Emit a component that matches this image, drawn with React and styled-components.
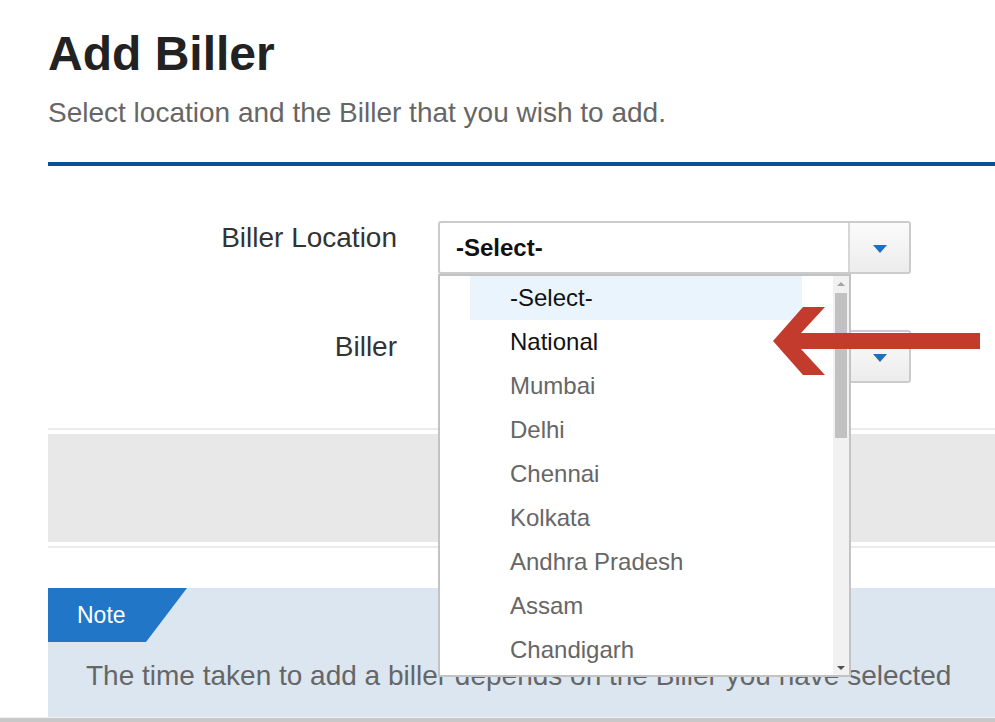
import styled, { createGlobalStyle } from "styled-components";

const GlobalStyle = createGlobalStyle`
  html, body {
    margin: 0;
    padding: 0;
    background: #fff;
    overflow: hidden;
  }
  body {
    font-family: "Liberation Sans", Arial, sans-serif;
  }
`;

const Page = styled.div`
  position: relative;
  height: 722px;
  padding-left: 48px;
  box-sizing: border-box;
  overflow: hidden;
`;

const Title = styled.h1`
  margin: 0;
  padding-top: 26px;
  font-size: 48px;
  line-height: 56px;
  font-weight: 700;
  color: #222;
`;

const Subtitle = styled.p`
  margin: 14px 0 0;
  font-size: 28px;
  line-height: 34px;
  color: #666;
`;

const Rule = styled.div`
  margin-top: 32px;
  height: 4px;
  background: #0a5096;
`;

const Form = styled.div`
  display: flex;
  flex-direction: column;
  gap: 56px;
  margin-top: 55px;
`;

const Row = styled.div`
  display: flex;
  align-items: flex-start;
`;

const Label = styled.label`
  width: 349px;
  margin-right: 41px;
  text-align: right;
  font-size: 28px;
  line-height: 34px;
  color: #333;
`;

const Field = styled.div`
  position: relative;
`;

const SelectBox = styled.div`
  display: flex;
  width: 473px;
  height: 53px;
  box-sizing: border-box;
  border: 2px solid #cbcbcb;
  border-radius: 3px;
  background: #fff;
`;

const Value = styled.div`
  flex: 1;
  padding-left: 16px;
  font-size: 24px;
  line-height: 49px;
  font-weight: 700;
  color: #111;
`;

const Toggle = styled.div`
  width: 59px;
  display: flex;
  align-items: center;
  justify-content: center;
  border-left: 2px solid #d6d6d6;
  background: linear-gradient(#fbfbfb, #ececec);
`;

const Caret = styled.span`
  width: 0;
  height: 0;
  margin-top: 3px;
  border-left: 7px solid transparent;
  border-right: 7px solid transparent;
  border-top: 8px solid #1e6fc2;
`;

const Dropdown = styled.div`
  position: absolute;
  top: 100%;
  left: 0;
  z-index: 2;
  width: 413px;
  height: 403px;
  box-sizing: border-box;
  border: 2px solid #c3c3c3;
  background: #fff;
  overflow: hidden;
`;

const Options = styled.ul`
  margin: 0;
  padding: 0 0 0 30px;
  list-style: none;
`;

const Option = styled.li`
  width: 332px;
  box-sizing: border-box;
  padding-left: 40px;
  font-size: 24px;
  line-height: 44px;
  color: ${(p) => (p.$strong ? "#111" : "#666")};
  background: ${(p) => (p.$active ? "#eaf4fd" : "transparent")};
`;

const Scrollbar = styled.div`
  position: absolute;
  top: 0;
  right: 0;
  bottom: 0;
  width: 16px;
  display: flex;
  flex-direction: column;
  align-items: center;
  background: #f1f1f1;
`;

const ScrollButton = styled.div`
  height: 15px;
  width: 100%;
  display: flex;
  align-items: center;
  justify-content: center;
`;

const ArrowUp = styled.span`
  width: 0;
  height: 0;
  border-left: 4px solid transparent;
  border-right: 4px solid transparent;
  border-bottom: 4px solid #a3a3a3;
`;

const ArrowDown = styled.span`
  width: 0;
  height: 0;
  border-left: 4px solid transparent;
  border-right: 4px solid transparent;
  border-top: 4px solid #505050;
`;

const Thumb = styled.div`
  width: 12px;
  height: 145px;
  margin-top: 2px;
  background: #c1c1c1;
`;

const Spacer = styled.div`
  flex: 1;
`;

const ActionBar = styled.div`
  margin-top: 45px;
  padding: 4px 0;
  border-top: 2px solid #ebebeb;
  border-bottom: 2px solid #ebebeb;
`;

const ActionFill = styled.div`
  height: 108px;
  background: #e8e8e8;
`;

const Note = styled.div`
  margin-top: 40px;
  padding-bottom: 24px;
  background: #dce6f1;
`;

const NoteTag = styled.div`
  width: 139px;
  height: 54px;
  box-sizing: border-box;
  padding-left: 29px;
  font-size: 23px;
  line-height: 54px;
  color: #fff;
  background: #2176c7;
  clip-path: polygon(0 0, 100% 0, calc(100% - 41px) 100%, 0 100%);
`;

const NoteText = styled.p`
  margin: 17px 0 0;
  padding-left: 38px;
  font-size: 28px;
  line-height: 34px;
  color: #666;
  white-space: nowrap;
`;

const BottomEdge = styled.div`
  margin-left: -48px;
  height: 4px;
  border-top: 1px solid #eef2f7;
  background: #c8c8c8;
`;

const Pointer = styled.svg`
  position: absolute;
  left: 770px;
  top: 300px;
  z-index: 3;
`;

const locations = [
  "-Select-",
  "National",
  "Mumbai",
  "Delhi",
  "Chennai",
  "Kolkata",
  "Andhra Pradesh",
  "Assam",
  "Chandigarh",
  "Goa",
  "Gujarat",
];

const Select = ({ value, children }) => (
  <Field>
    <SelectBox>
      <Value>{value}</Value>
      <Toggle>
        <Caret />
      </Toggle>
    </SelectBox>
    {children}
  </Field>
);

export default function App() {
  return (
    <Page>
      <GlobalStyle />
      <Title>Add Biller</Title>
      <Subtitle>Select location and the Biller that you wish to add.</Subtitle>
      <Rule />

      <Form>
        <Row>
          <Label>Biller Location</Label>
          <Select value="-Select-">
            <Dropdown>
              <Options>
                {locations.map((name, i) => (
                  <Option key={name} $active={i === 0} $strong={i < 2}>
                    {name}
                  </Option>
                ))}
              </Options>
              <Scrollbar>
                <ScrollButton>
                  <ArrowUp />
                </ScrollButton>
                <Thumb />
                <Spacer />
                <ScrollButton>
                  <ArrowDown />
                </ScrollButton>
              </Scrollbar>
            </Dropdown>
          </Select>
        </Row>
        <Row>
          <Label>Biller</Label>
          <Select value="-Select-" />
        </Row>
      </Form>

      <ActionBar>
        <ActionFill />
      </ActionBar>

      <Note>
        <NoteTag>Note</NoteTag>
        <NoteText>
          The time taken to add a biller depends on the Biller you have selected
        </NoteText>
      </Note>
      <BottomEdge />

      <Pointer width="215" height="80" viewBox="0 0 215 80">
        <polygon
          points="3,41 33,7 55,7 31,33 210,33 210,49 31,49 55,75 33,75"
          fill="#c33b2d"
        />
      </Pointer>
    </Page>
  );
}
